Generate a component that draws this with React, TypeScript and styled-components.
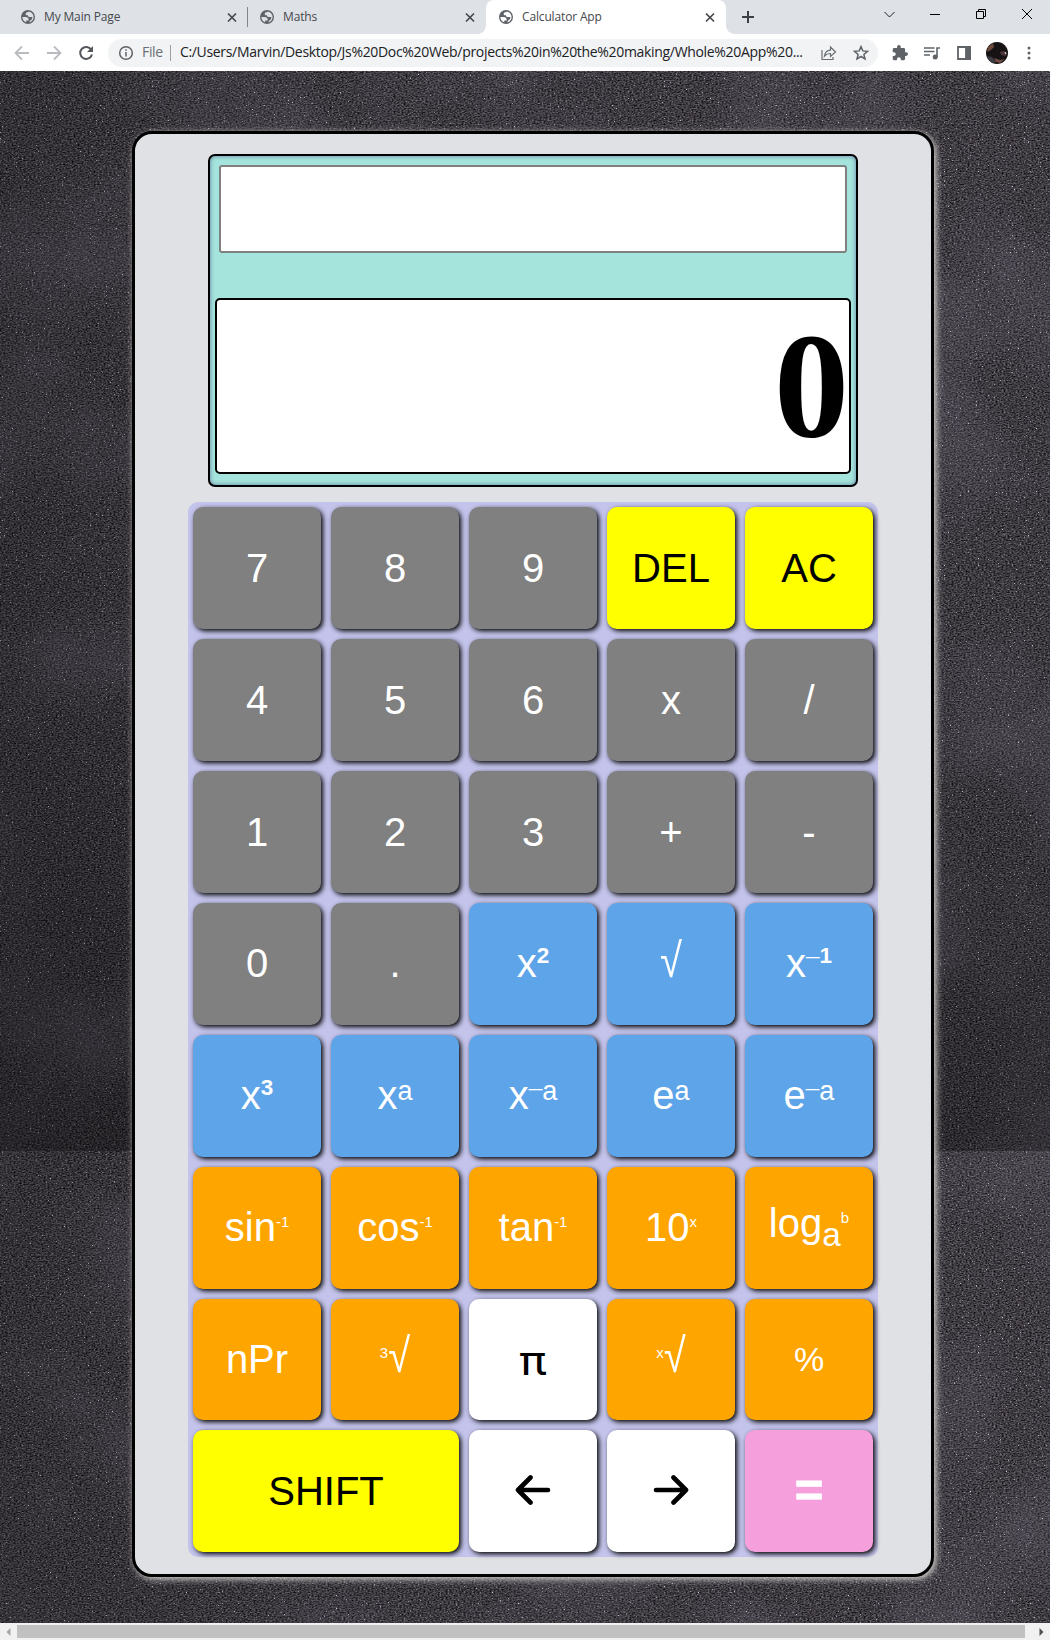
import React from "react";
import styled, { createGlobalStyle } from "styled-components";

const GlobalStyle = createGlobalStyle`
  * { box-sizing: border-box; }
  body { margin: 0; background: #3a383d; font-family: "Liberation Sans", Arial, sans-serif; }
`;

const Window = styled.div`
  width: 1050px;
  height: 1640px;
  display: flex;
  flex-direction: column;
  overflow: hidden;
`;

/* ---------- browser chrome ---------- */

const TabBar = styled.div`
  height: 34px;
  flex: none;
  display: flex;
  background: #dee1e6;
`;

const Tab = styled.div<{ $active?: boolean; $width: number; $divider?: boolean; $start: number }>`
  width: ${(p) => p.$width}px;
  height: 34px;
  display: flex;
  align-items: center;
  padding: 0 8px 0 ${(p) => p.$start}px;
  background: ${(p) => (p.$active ? "#fff" : "#dee1e6")};
  border-radius: ${(p) => (p.$active ? "8px 8px 0 0" : "0")};
  position: relative;
  &::before {
    content: "";
    display: ${(p) => (p.$active ? "block" : "none")};
    position: absolute;
    left: -8px;
    right: -8px;
    bottom: 0;
    height: 8px;
    background:
      radial-gradient(circle at 0 0, transparent 7.5px, #fff 8px) left / 8px 8px no-repeat,
      radial-gradient(circle at 100% 0, transparent 7.5px, #fff 8px) right / 8px 8px no-repeat;
  }
  &::after {
    content: "";
    display: ${(p) => (p.$divider ? "block" : "none")};
    position: absolute;
    right: 0;
    top: 7px;
    width: 1px;
    height: 20px;
    background: #80868b;
  }
`;

const TabTitle = styled.span`
  flex: 1;
  margin-left: 9px;
  font: 12px/16px "Open Sans", "Noto Sans", sans-serif;
  letter-spacing: -0.15px;
  color: #45484d;
`;

const WindowControls = styled.div`
  margin-left: auto;
  display: flex;
  gap: 28px;
  padding: 5px 14px 0 0;
`;

const NewTab = styled.div`
  padding: 8px 0 0 13px;
`;

const Toolbar = styled.div`
  height: 37px;
  flex: none;
  display: flex;
  align-items: center;
  padding: 0 14px 0 13px;
  background: #fff;
`;

const NavIcons = styled.div`
  display: flex;
  gap: 14px;
  width: 95px;
`;

const Address = styled.div`
  width: 770px;
  height: 28px;
  border-radius: 14px;
  background: #f1f3f4;
  display: flex;
  align-items: center;
  padding: 0 8px 0 9px;
`;

const AddressText = styled.span<{ $muted?: boolean }>`
  font: 14px/20px "Open Sans", "Noto Sans", sans-serif;
  letter-spacing: -0.32px;
  white-space: nowrap;
  color: ${(p) => (p.$muted ? "#6a6e73" : "#202124")};
  margin: ${(p) => (p.$muted ? "0 0 1px 7px" : "0 0 1px 9px")};
`;

const Divider = styled.span`
  width: 1px;
  height: 16px;
  margin-left: 7px;
  background: #9aa0a6;
`;

const AddressActions = styled.div`
  margin-left: auto;
  display: flex;
  gap: 14px;
`;

const Extensions = styled.div`
  margin-left: auto;
  display: flex;
  align-items: center;
  gap: 14px;
`;

const Icon = styled.svg`
  display: block;
  flex: none;
`;

/* ---------- page ---------- */

const Page = styled.div`
  flex: 1;
  position: relative;
  padding: 60px 0 0 132px;
  overflow: hidden;
`;

const Texture = styled.svg`
  position: absolute;
  inset: 0;
`;

const Calculator = styled.div`
  position: relative;
  width: 802px;
  height: 1446px;
  border: 3px solid #000;
  border-radius: 20px;
  background: #e0e1e5;
  box-shadow: 2px 2px 7px #dcd9d6;
  padding: 20px 0 0 53px;
`;

const Display = styled.div`
  width: 650px;
  height: 333px;
  margin-left: 20px;
  border: 2px solid #000;
  border-radius: 7px;
  background: #a4e4dc;
  box-shadow: inset 0 0 4px rgba(60, 60, 130, 0.65);
  padding: 9px 5px;
`;

const HistoryField = styled.div`
  height: 88px;
  margin: 0 4px 45px;
  border: 2px solid #808080;
  border-radius: 3px;
  background: #fff;
`;

const ResultField = styled.div`
  height: 176px;
  border: 2px solid #000;
  border-radius: 5px;
  background: #fff;
  text-align: right;
  font: bold 150px/172px "Liberation Serif", "Times New Roman", serif;
  color: #000;
`;

const Keypad = styled.div`
  width: 690px;
  height: 1055px;
  margin-top: 15px;
  padding: 5px;
  border-radius: 10px;
  background: #c3c3eb;
  display: grid;
  grid-template-columns: repeat(5, 128px);
  grid-template-rows: repeat(6, 122px) 121px 122px;
  gap: 10px;
`;

const tones = {
  gray: ["#808080", "#fff"],
  yellow: ["#ffff00", "#000"],
  blue: ["#5ea4e8", "#fff"],
  orange: ["#ffa500", "#fff"],
  white: ["#fff", "#000"],
  pink: ["#f5a0dc", "#fff"],
};
type Tone = keyof typeof tones;

const Key = styled.button<{ $tone: Tone; $wide?: boolean; $size?: number; $bold?: boolean }>`
  grid-column: span ${(p) => (p.$wide ? 2 : 1)};
  display: flex;
  align-items: center;
  justify-content: center;
  min-height: 0;
  padding: 0;
  border: 0;
  border-radius: 10px;
  box-shadow: 2px 2px 5px #000;
  background: ${(p) => tones[p.$tone][0]};
  color: ${(p) => tones[p.$tone][1]};
  font: ${(p) => (p.$bold ? "bold" : "normal")} ${(p) => p.$size ?? 40}px/46px "Liberation Sans", Arial, sans-serif;
  -webkit-text-stroke: ${(p) => (p.$bold ? "0.8px #fff" : "0")};
`;

const Label = styled.span<{ $shift?: number }>`
  display: block;
  white-space: nowrap;
  padding-bottom: ${(p) => p.$shift ?? 0}px;
`;

const Raised = styled.span<{ $size: number; $rise: number; $bold?: boolean; $serif?: boolean }>`
  display: inline-block;
  line-height: 0;
  font-size: ${(p) => p.$size}px;
  font-weight: ${(p) => (p.$bold ? "bold" : "normal")};
  font-family: ${(p) => (p.$serif ? '"Liberation Serif", serif' : "inherit")};
  vertical-align: ${(p) => p.$rise}px;
`;

const Root = styled.span`
  display: inline-block;
  transform: scale(1, 1.2);
  transform-origin: 50% 82%;
`;

const Pi = styled.span`
  display: inline-block;
  font-family: Roboto, sans-serif;
  transform: translateY(2px) scaleX(1.15);
`;

const Digit = ({ children }: { children: string }) => (
  <Raised $size={22.5} $rise={14} $bold>{children}</Raised>
);
const Letter = ({ children }: { children: string }) => (
  <Raised $size={27} $rise={9}>{children}</Raised>
);
const Minus = () => <Raised $size={27} $rise={13} $serif>–</Raised>;
const Small = ({ children }: { children: string }) => (
  <Raised $size={15} $rise={14}>{children}</Raised>
);

const Arrow = ({ flip }: { flip?: boolean }) => (
  <Icon width="36" height="32" viewBox="0 0 36 32" fill="none" stroke="#000" strokeWidth="4.600" strokeLinecap="round" strokeLinejoin="round">
    <path d={flip ? "M3 16H33M20.500 3.500L33 16L20.500 28.500" : "M33 16H3M15.500 3.500L3 16L15.500 28.500"} />
  </Icon>
);

const keys: { label: React.ReactNode; tone: Tone; wide?: boolean; size?: number; bold?: boolean; shift?: number }[] = [
  { label: "7", tone: "gray" },
  { label: "8", tone: "gray" },
  { label: "9", tone: "gray" },
  { label: "DEL", tone: "yellow" },
  { label: "AC", tone: "yellow" },
  { label: "4", tone: "gray" },
  { label: "5", tone: "gray" },
  { label: "6", tone: "gray" },
  { label: "x", tone: "gray" },
  { label: "/", tone: "gray" },
  { label: "1", tone: "gray" },
  { label: "2", tone: "gray" },
  { label: "3", tone: "gray" },
  { label: "+", tone: "gray" },
  { label: "-", tone: "gray" },
  { label: "0", tone: "gray", shift: 2 },
  { label: ".", tone: "gray", shift: 2 },
  { label: <>x<Digit>2</Digit></>, tone: "blue", shift: 2 },
  { label: <Root>√</Root>, tone: "blue", shift: 2 },
  { label: <>x<Minus /><Digit>1</Digit></>, tone: "blue", shift: 2 },
  { label: <>x<Digit>3</Digit></>, tone: "blue", shift: 2 },
  { label: <>x<Letter>a</Letter></>, tone: "blue", shift: 2 },
  { label: <>x<Minus /><Letter>a</Letter></>, tone: "blue", shift: 2 },
  { label: <>e<Letter>a</Letter></>, tone: "blue", shift: 2 },
  { label: <>e<Minus /><Letter>a</Letter></>, tone: "blue", shift: 2 },
  { label: <>sin<Small>-1</Small></>, tone: "orange", shift: 2 },
  { label: <>cos<Small>-1</Small></>, tone: "orange", shift: 2 },
  { label: <>tan<Small>-1</Small></>, tone: "orange", shift: 2 },
  { label: <>10<Small>x</Small></>, tone: "orange", shift: 2 },
  { label: <>log<Raised $size={33.3} $rise={-9}>a</Raised><Small>b</Small></>, tone: "orange", shift: 10 },
  { label: "nPr", tone: "orange", shift: 2 },
  { label: <><Small>3</Small><Root>√</Root></>, tone: "orange", shift: 4 },
  { label: <Pi>π</Pi>, tone: "white" },
  { label: <><Small>x</Small><Root>√</Root></>, tone: "orange", shift: 4 },
  { label: "%", tone: "orange", size: 34, shift: 2 },
  { label: "SHIFT", tone: "yellow", wide: true },
  { label: <Arrow />, tone: "white", shift: 2 },
  { label: <Arrow flip />, tone: "white", shift: 2 },
  { label: "=", tone: "pink", size: 49, bold: true, shift: 2 },
];

/* ---------- scrollbar ---------- */

const ScrollBar = styled.div`
  height: 17px;
  flex: none;
  display: flex;
  align-items: center;
  justify-content: space-between;
  background: #f1f1f1;
`;

const ScrollThumb = styled.div`
  width: 1008px;
  height: 13px;
  margin-right: 8px;
  background: #c1c1c1;
`;

const ScrollButton = styled.div`
  width: 17px;
  display: flex;
  justify-content: center;
`;

const Globe = () => (
  <Icon width="14" height="14" viewBox="2 2 20 20" fill="#5f6368">
    <path d="M12 2a10 10 0 1 0 0 20 10 10 0 0 0 0-20zM4 12h4.400c3.400 0 4.900 1.700 4.600 5.100H9.500v2.500A8 8 0 0 1 4 12zm10.300 7.700c.3-1.300.2-2.500.2-2.500 2.500-.6 3.700-2.400 3.700-5.200h-3.600c-1.700 0-2.700-.9-2.700-2.500-2.100.3-3.200-.3-3.200-1.700 0-2.200 1.300-2.600 3.800-2.600V4a8 8 0 0 1 7.500 8c0 3.700-2.400 6.700-5.700 7.700z" />
  </Icon>
);

const Close = () => (
  <Icon width="16" height="16" viewBox="0 0 16 16" stroke="#45484d" strokeWidth="1.700">
    <path d="M4 4.500l8 8M12 4.500l-8 8" />
  </Icon>
);

const Chalkboard = () => (
  <Texture width="1050" height="1552">
    <defs>
      <filter id="grain" x="0" y="0" width="100%" height="100%" colorInterpolationFilters="sRGB">
        <feTurbulence type="fractalNoise" baseFrequency="0.5 0.75" numOctaves="3" seed="4" />
        <feColorMatrix values=".58 .14 0 0 -.115  .58 .14 0 0 -.13  .58 .14 0 0 -.105  0 0 0 0 1" />
      </filter>
      <filter id="specks" x="0" y="0" width="100%" height="100%" colorInterpolationFilters="sRGB">
        <feTurbulence type="fractalNoise" baseFrequency="0.5 0.65" numOctaves="2" seed="21" />
        <feColorMatrix values="0 0 0 0 .8  0 0 0 0 .8  0 0 0 0 .86  7 0 0 0 -4.950" />
      </filter>
      <filter id="dust" x="0" y="0" width="100%" height="100%" colorInterpolationFilters="sRGB">
        <feTurbulence type="fractalNoise" baseFrequency="0.007" numOctaves="5" seed="9" />
        <feColorMatrix values="0 0 0 0 .43  0 0 0 0 .42  0 0 0 0 .48  .8 0 0 0 -.34" />
      </filter>
      <linearGradient id="shade" x1="0" x2="1" y1="0" y2="0">
        <stop offset="0" stopColor="#000" stopOpacity=".2" />
        <stop offset=".3" stopColor="#000" stopOpacity=".05" />
        <stop offset="1" stopColor="#000" stopOpacity="0" />
      </linearGradient>
      <linearGradient id="fade" x1="0" x2="0" y1="0" y2="1">
        <stop offset="0" stopColor="#000" stopOpacity="0" />
        <stop offset=".55" stopColor="#000" stopOpacity=".05" />
        <stop offset="1" stopColor="#000" stopOpacity=".3" />
      </linearGradient>
    </defs>
    <rect width="1050" height="1552" filter="url(#grain)" />
    <rect width="1050" height="1552" filter="url(#dust)" />
    <rect width="1050" height="1552" filter="url(#specks)" />
    <rect width="1050" height="1552" fill="url(#shade)" />
    <rect width="1050" height="1080" fill="url(#fade)" />
  </Texture>
);

export default function App() {
  return (
    <Window>
      <GlobalStyle />
      <TabBar>
        <Tab $width={248} $divider $start={21}>
          <Globe /><TabTitle>My Main Page</TabTitle><Close />
        </Tab>
        <Tab $width={238} $start={12}>
          <Globe /><TabTitle>Maths</TabTitle><Close />
        </Tab>
        <Tab $width={240} $active $start={13}>
          <Globe /><TabTitle>Calculator App</TabTitle><Close />
        </Tab>
        <NewTab>
          <Icon width="18" height="18" viewBox="0 0 18 18" stroke="#3c4043" strokeWidth="2">
            <path d="M9 3v12M3 9h12" />
          </Icon>
        </NewTab>
        <WindowControls>
          <Icon width="18" height="18" viewBox="0 0 18 18" fill="none" stroke="#222" strokeWidth="1">
            <path d="M4.500 7l5 5 5-5" />
          </Icon>
          <Icon width="18" height="18" viewBox="0 0 18 18" stroke="#000">
            <path d="M4 9.500h10" />
          </Icon>
          <Icon width="18" height="18" viewBox="0 0 18 18" fill="none" stroke="#000">
            <path d="M4.500 6.500h7v7h-7zM6.500 6.500v-2h7v7h-2" />
          </Icon>
          <Icon width="18" height="18" viewBox="0 0 18 18" stroke="#000">
            <path d="M4 4l10 10M14 4L4 14" />
          </Icon>
        </WindowControls>
      </TabBar>
      <Toolbar>
        <NavIcons>
          <Icon width="18" height="18" viewBox="0 0 18 18" fill="none" stroke="#b9bbbe" strokeWidth="1.800">
            <path d="M16 9H3M9 2.500L2.500 9L9 15.500" />
          </Icon>
          <Icon width="18" height="18" viewBox="0 0 18 18" fill="none" stroke="#b9bbbe" strokeWidth="1.800">
            <path d="M2 9h13M9 2.500L15.500 9L9 15.500" />
          </Icon>
          <Icon width="18" height="18" viewBox="0 0 18 18" fill="none" stroke="#54585d" strokeWidth="2">
            <path d="M14.300 5.700A6 6 0 1 0 15 10.500" />
            <path d="M16 2v6h-6z" fill="#54585d" stroke="none" />
          </Icon>
        </NavIcons>
        <Address>
          <Icon width="18" height="18" viewBox="0 0 18 18" fill="none" stroke="#5f6368" strokeWidth="1.500">
            <circle cx="9" cy="9" r="6.300" />
            <path d="M9 8v4.500M9 5.200v1.600" />
          </Icon>
          <AddressText $muted>File</AddressText>
          <Divider />
          <AddressText>C:/Users/Marvin/Desktop/Js%20Doc%20Web/projects%20in%20the%20making/Whole%20App%20...</AddressText>
          <AddressActions>
            <Icon width="18" height="18" viewBox="0 0 18 18" fill="none" stroke="#6a6e73" strokeWidth="1.200">
              <path d="M2 6v9.500h11V13M4.500 12c.5-4 2.500-5.600 6-5.800V3l5 5-5 4.500V9.500c-2.800 0-4.500.7-6 2.500z" />
            </Icon>
            <Icon width="18" height="18" viewBox="0 0 18 18" fill="none" stroke="#5f6368" strokeWidth="1.500">
              <path d="M9 2.600l1.800 4.300 4.700.4-3.600 3.100 1.100 4.600L9 12.500 5 15l1.100-4.600-3.600-3.100 4.700-.4z" />
            </Icon>
          </AddressActions>
        </Address>
        <Extensions>
          <Icon width="16" height="16" viewBox="1 1 22 22" fill="#5f6368">
            <path d="M20.500 11H19V7a2 2 0 0 0-2-2h-4V3.500a2.500 2.500 0 0 0-5 0V5H4a2 2 0 0 0-2 2v3.800h1.500a2.700 2.700 0 0 1 0 5.400H2V20c0 1.100.9 2 2 2h3.800v-1.500a2.700 2.700 0 0 1 5.400 0V22H17a2 2 0 0 0 2-2v-4h1.500a2.500 2.500 0 0 0 0-5z" />
          </Icon>
          <Icon width="18" height="18" viewBox="0 0 18 18" fill="none" stroke="#5f6368" strokeWidth="1.600">
            <path d="M2 4h10.500M2 7.500h10.500M2 11h6M15 13V4h3" />
            <circle cx="13.200" cy="13" r="1.700" fill="#5f6368" />
          </Icon>
          <Icon width="18" height="18" viewBox="0 0 18 18" fill="none" stroke="#5f6368" strokeWidth="1.800">
            <path d="M4 3h12v12H4z" />
            <path d="M12 3h4v12h-4z" fill="#5f6368" />
          </Icon>
          <Icon width="22" height="22" viewBox="0 0 22 22">
            <circle cx="11" cy="11" r="11" fill="#171315" />
            <path d="M2 5l5-4 1 4-3 3-4 2z" fill="#694739" />
            <path d="M1 14l5 1 4 5-3 1c-3-1-5-4-6-7z" fill="#3d3b43" />
            <path d="M8 16l6 2 5-1-5 4-4-1z" fill="#714b40" />
            <path d="M14 10l4-1 3 2-1 3-5-1z" fill="#4a3538" />
            <path d="M19 10l1 2" stroke="#eee" />
          </Icon>
          <Icon width="14" height="18" viewBox="0 0 14 18" fill="#5f6368">
            <circle cx="7" cy="4" r="1.500" />
            <circle cx="7" cy="9" r="1.500" />
            <circle cx="7" cy="14" r="1.500" />
          </Icon>
        </Extensions>
      </Toolbar>
      <Page>
        <Chalkboard />
        <Calculator>
          <Display>
            <HistoryField />
            <ResultField>0</ResultField>
          </Display>
          <Keypad>
            {keys.map((k, i) => (
              <Key key={i} $tone={k.tone} $wide={k.wide} $size={k.size} $bold={k.bold}>
                <Label $shift={k.shift}>{k.label}</Label>
              </Key>
            ))}
          </Keypad>
        </Calculator>
      </Page>
      <ScrollBar>
        <ScrollButton>
          <Icon width="5" height="8" viewBox="0 0 5 8" fill="#a3a3a3"><path d="M4.500 0v8L.5 4z" /></Icon>
        </ScrollButton>
        <ScrollThumb />
        <ScrollButton>
          <Icon width="5" height="8" viewBox="0 0 5 8" fill="#505050"><path d="M.5 0v8l4-4z" /></Icon>
        </ScrollButton>
      </ScrollBar>
    </Window>
  );
}
